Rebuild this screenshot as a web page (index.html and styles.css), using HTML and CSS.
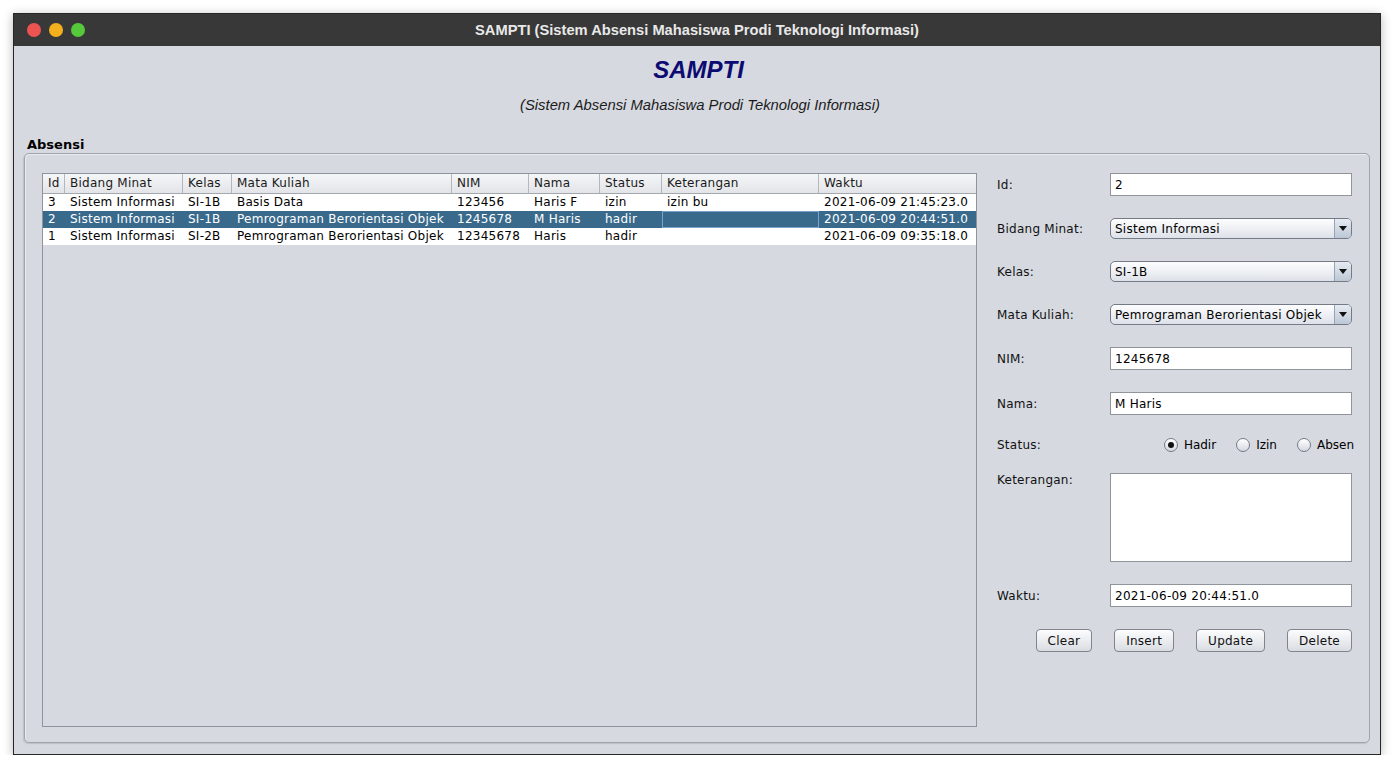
FILE: index.html
```html
<!DOCTYPE html>
<html>
<head>
<meta charset="utf-8">
<title>SAMPTI</title>
<link rel="stylesheet" href="styles.css">
</head>
<body>
<div class="window">
  <div class="titlebar">
    <div class="lights"><span class="light red"></span><span class="light yellow"></span><span class="light green"></span></div>
    <div class="title">SAMPTI (Sistem Absensi Mahasiswa Prodi Teknologi Informasi)</div>
    <div></div>
  </div>
  <div class="content">
    <h1 class="brand">SAMPTI</h1>
    <p class="subtitle">(Sistem Absensi Mahasiswa Prodi Teknologi Informasi)</p>
    <div class="group-title">Absensi</div>
    <div class="group">
      <div class="table-pane">
        <div class="trow thead">
          <div class="th">Id</div>
          <div class="th">Bidang Minat</div>
          <div class="th">Kelas</div>
          <div class="th">Mata Kuliah</div>
          <div class="th">NIM</div>
          <div class="th">Nama</div>
          <div class="th">Status</div>
          <div class="th">Keterangan</div>
          <div class="th">Waktu</div>
        </div>
        <div class="trow">
          <div class="td">3</div>
          <div class="td">Sistem Informasi</div>
          <div class="td">SI-1B</div>
          <div class="td">Basis Data</div>
          <div class="td">123456</div>
          <div class="td">Haris F</div>
          <div class="td">izin</div>
          <div class="td">izin bu</div>
          <div class="td">2021-06-09 21:45:23.0</div>
        </div>
        <div class="trow selected">
          <div class="td">2</div>
          <div class="td">Sistem Informasi</div>
          <div class="td">SI-1B</div>
          <div class="td">Pemrograman Berorientasi Objek</div>
          <div class="td">1245678</div>
          <div class="td">M Haris</div>
          <div class="td">hadir</div>
          <div class="td focus"></div>
          <div class="td">2021-06-09 20:44:51.0</div>
        </div>
        <div class="trow">
          <div class="td">1</div>
          <div class="td">Sistem Informasi</div>
          <div class="td">SI-2B</div>
          <div class="td">Pemrograman Berorientasi Objek</div>
          <div class="td">12345678</div>
          <div class="td">Haris</div>
          <div class="td">hadir</div>
          <div class="td"></div>
          <div class="td">2021-06-09 09:35:18.0</div>
        </div>
      </div>

      <div class="form">
        <div class="frow">
          <span class="flabel">Id:</span>
          <div class="field">2</div>
        </div>
        <div class="frow">
          <span class="flabel">Bidang Minat:</span>
          <div class="combo"><span class="combo-text">Sistem Informasi</span><span class="combo-btn"><span class="arrow"></span></span></div>
        </div>
        <div class="frow">
          <span class="flabel">Kelas:</span>
          <div class="combo"><span class="combo-text">SI-1B</span><span class="combo-btn"><span class="arrow"></span></span></div>
        </div>
        <div class="frow">
          <span class="flabel">Mata Kuliah:</span>
          <div class="combo"><span class="combo-text">Pemrograman Berorientasi Objek</span><span class="combo-btn"><span class="arrow"></span></span></div>
        </div>
        <div class="frow">
          <span class="flabel">NIM:</span>
          <div class="field">1245678</div>
        </div>
        <div class="frow">
          <span class="flabel">Nama:</span>
          <div class="field">M Haris</div>
        </div>
        <div class="frow status-row">
          <span class="flabel">Status:</span>
          <div class="radios">
            <span class="radio"><span class="dot checked"></span>Hadir</span>
            <span class="radio"><span class="dot"></span>Izin</span>
            <span class="radio"><span class="dot"></span>Absen</span>
          </div>
        </div>
        <div class="frow top">
          <span class="flabel">Keterangan:</span>
          <div class="area"></div>
        </div>
        <div class="frow">
          <span class="flabel">Waktu:</span>
          <div class="field">2021-06-09 20:44:51.0</div>
        </div>
        <div class="buttons">
          <span class="btn">Clear</span>
          <span class="btn">Insert</span>
          <span class="btn">Update</span>
          <span class="btn">Delete</span>
        </div>
      </div>
    </div>
  </div>
</div>
</body>
</html>
```

FILE: styles.css
```css
* { box-sizing: border-box; }
html, body { margin: 0; padding: 0; background: #ffffff; }
body {
  font-family: "DejaVu Sans", sans-serif;
  font-size: 12px;
  color: #000;
}
.window {
  margin: 13px 0 0 13px;
  width: 1368px;
  height: 742px;
  border: 1px solid #262626;
  display: flex;
  flex-direction: column;
  background: #d6d9e0;
  box-shadow: 0 2px 10px rgba(0, 0, 0, 0.28);
}
.titlebar {
  height: 32px;
  flex: none;
  background: #383838;
  display: grid;
  grid-template-columns: 1fr auto 1fr;
  align-items: center;
}
.lights { display: flex; gap: 8px; padding-left: 13px; }
.light { width: 14px; height: 14px; border-radius: 50%; display: block; }
.red { background: #ed5451; }
.yellow { background: #f2b01e; }
.green { background: #56c93b; }
.title {
  color: #e8e8e8;
  font-family: "Liberation Sans", Arial, sans-serif;
  font-weight: bold;
  font-size: 14.7px;
}
.content { flex: 1; display: flex; flex-direction: column; min-height: 0; }
.brand {
  margin: 10px 0 0;
  padding-left: 3px;
  text-align: center;
  font: italic bold 24px/28px "Liberation Sans", Arial, sans-serif;
  color: #0b0b72;
}
.subtitle {
  margin: 12px 0 0;
  padding-left: 6px;
  text-align: center;
  font: italic 14.8px/18px "Liberation Sans", Arial, sans-serif;
  color: #1c1c1c;
}
.group-title {
  margin: 23px 0 0 13px;
  font-weight: bold;
  font-size: 13px;
  line-height: 16px;
}
.group {
  flex: 1;
  margin: 0 10px 11px;
  border: 1px solid #a0a4ab;
  border-radius: 5px;
  padding: 19px 15px 15px 17px;
  display: flex;
  gap: 20px;
  box-shadow: -1px 1px 1px rgba(0, 0, 0, 0.12), inset 1px 1px 0 rgba(255, 255, 255, 0.45);
  min-height: 0;
  letter-spacing: 0.25px;
}
.table-pane {
  width: 935px;
  flex: none;
  border: 1px solid #8f949c;
  background: #d6d9e0;
}
.trow {
  display: grid;
  grid-template-columns: 22px 118px 49px 220px 77px 71px 62px 157px 157px;
  height: 17px;
  background: #ffffff;
}
.trow.thead {
  height: 20px;
  background: linear-gradient(#f5f6f8, #e2e4e8);
  border-bottom: 1px solid #a3a7ae;
}
.th {
  border-right: 1px solid #b4b7bd;
  padding-left: 5px;
  line-height: 19px;
  color: #1a1a1a;
  white-space: nowrap;
  overflow: hidden;
}
.th:last-child { border-right: none; }
.td {
  padding-left: 5px;
  line-height: 17px;
  white-space: nowrap;
  overflow: hidden;
}
.trow.selected { background: #39698b; color: #ffffff; }
.td.focus { box-shadow: inset 0 0 0 1px #7ba3ca; }

.form {
  width: 357px;
  flex: none;
  display: flex;
  flex-direction: column;
  gap: 22px;
}
.frow { display: flex; align-items: center; }
.frow.top { align-items: flex-start; }
.flabel { width: 113px; flex: none; color: #111; padding-top: 1px; }
.field {
  width: 242px;
  height: 23px;
  border: 1px solid #90959c;
  background: #ffffff;
  padding-left: 4px;
  line-height: 22px;
  white-space: nowrap;
}
.combo {
  width: 242px;
  height: 21px;
  border: 1px solid #747b86;
  border-radius: 5px;
  background: linear-gradient(#fdfdfe, #eef0f4 50%, #dde1e8);
  display: flex;
  overflow: hidden;
}
.combo-text {
  flex: 1;
  padding-left: 4px;
  line-height: 20px;
  white-space: nowrap;
  overflow: hidden;
}
.combo-btn {
  width: 17px;
  flex: none;
  border-left: 1px solid #9aa3b0;
  background: linear-gradient(#e6ebf2, #bcc7d6);
  display: flex;
  align-items: center;
  justify-content: center;
}
.arrow {
  width: 0;
  height: 0;
  border-left: 4px solid transparent;
  border-right: 4px solid transparent;
  border-top: 5px solid #111;
}
.status-row { height: 14px; }
.radios {
  flex: 1;
  display: flex;
  justify-content: flex-end;
  gap: 20px;
  letter-spacing: 0;
}
.radio { display: flex; align-items: center; gap: 6px; line-height: 14px; padding-top: 1px; }
.dot {
  width: 14px;
  height: 14px;
  border-radius: 50%;
  border: 1px solid #747b85;
  background: linear-gradient(#ffffff, #d4d8df);
  display: flex;
  align-items: center;
  justify-content: center;
}
.dot.checked::after {
  content: "";
  width: 6px;
  height: 6px;
  border-radius: 50%;
  background: #111;
}
.area {
  width: 242px;
  height: 89px;
  border: 1px solid #90959c;
  background: #ffffff;
}
.frow.top .flabel { padding-top: 0; }
.buttons {
  display: flex;
  justify-content: flex-end;
  gap: 22px;
  padding-right: 2px;
}
.btn {
  height: 23px;
  padding: 0 11px;
  border: 1px solid #80858d;
  border-radius: 4px;
  background: linear-gradient(#fcfcfd, #e9ebef 55%, #d9dce1);
  line-height: 22px;
  color: #111;
}
```
